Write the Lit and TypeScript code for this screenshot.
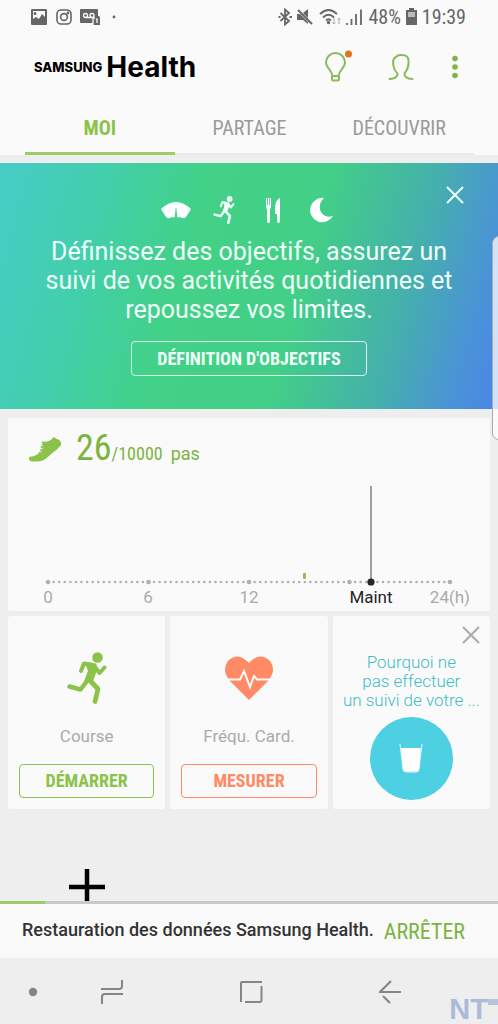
import { LitElement, html, svg, css, type TemplateResult } from "lit";
import { customElement, property, state } from "lit/decorators.js";
import { classMap } from "lit/directives/class-map.js";

const runner = html`<svg viewBox="0 0 40 52" fill="none" stroke="currentColor" stroke-linecap="round" stroke-linejoin="round" aria-hidden="true">
  <circle cx="30.500" cy="5.500" r="5.300" fill="currentColor" stroke="none"/>
  <path d="M14 19L17 11.500L26 13" stroke-width="4"/>
  <path d="M28 15L32.500 21L37.500 15.500" stroke-width="4"/>
  <path d="M19 11L28.500 12.500L29 18L25.500 28L18 29.500L22 19Z" fill="currentColor" stroke-width="2"/>
  <path d="M20 29L13.500 37.500L2.500 34.500" stroke-width="4.500"/>
  <path d="M23 28.500L31 37L28 49.500" stroke-width="4.800"/>
</svg>`;

const cross = html`<svg class="cross" viewBox="0 0 18 18" fill="none" stroke="currentColor" aria-hidden="true"><path d="M1 1L17 17M17 1L1 17"/></svg>`;

@customElement("status-bar")
class StatusBar extends LitElement {
  static styles = css`
    :host { display: flex; align-items: center; justify-content: space-between; height: 34px; padding: 0 32px 0 30px; color: #666; font-size: 20px; line-height: 24px; font-family: "Roboto Condensed", Roboto, sans-serif; }
    .group { display: flex; align-items: center; gap: 8px; }
    .right { gap: 4px; }
    svg { display: block; flex: none; }
  `;
  render() {
    return html`
      <div class="group">
        <svg width="18" height="16" viewBox="0 0 18 16"><path fill="#666" fill-rule="evenodd" d="M2 0H16Q17 0 17 1V15Q17 16 16 16H2Q1 16 1 15V1Q1 0 2 0ZM3 2V10L6 8L9 10L12 5L15 8V2ZM5 3A1.500 1.500 0 1 1 5 6A1.500 1.500 0 1 1 5 3Z"/></svg>
        <svg width="16" height="16" viewBox="0 0 16 16" fill="none" stroke="#666" stroke-width="1.600"><rect x="1" y="1" width="14" height="14" rx="4"/><circle cx="8" cy="8" r="3.400"/><circle cx="12" cy="4" r=".6" fill="#666"/></svg>
        <svg width="20" height="16" viewBox="0 0 20 16"><path fill="#666" d="M1 0H17Q18 0 18 1V7H19Q20 8 20 9V16H13V14H1Q0 14 0 13V1Q0 0 1 0Z"/><g fill="none" stroke="#fafafa" stroke-width="1.300"><circle cx="5.500" cy="6.500" r="2"/><circle cx="12" cy="6.500" r="2"/><path d="M5.500 8.500H12M13 16V9H15M16 10.500L17 10V14"/></g></svg>
        <svg width="14" height="16" viewBox="0 0 14 16"><circle cx="6" cy="8" r="1.400" fill="#666"/></svg>
      </div>
      <div class="group right">
        <svg width="14" height="18" viewBox="1 0 14 18" fill="none" stroke="#666" stroke-width="1.800"><path d="M3.500 5L12 13L8 16.500V1.500L12 5L3.500 13M1.500 9H3.500M12.500 9H15"/></svg>
        <svg width="18" height="18" viewBox="0 0 18 18"><path fill="#666" d="M1 6H4L12 14V16L7 12H1ZM7 5L12 1V10Z"/><path d="M2 2L16 16" stroke="#666" stroke-width="2"/></svg>
        <svg width="24" height="18" viewBox="0 0 24 18" fill="none" stroke="#666" stroke-width="1.800"><path d="M2 6Q10.500 -2 19 6M5 9.500Q10.500 4 16 9.500M8 12.500Q10.500 10 13 12.500"/><circle cx="10.500" cy="14.500" r=".8" fill="#666"/><path d="M16 10V16M14.500 14.500L16 16L17.500 14.500M21 16V10M19.500 11.500L21 10L22.500 11.500" stroke="#aaa" stroke-width="1"/></svg>
        <svg width="18" height="18" viewBox="1 0 18 18" stroke="#666" stroke-width="1.800"><path d="M2 17V15M6.500 17V11M11 17V6M16 17V1.500"/></svg>
        <span>48%</span>
        <svg width="13" height="18" viewBox="0 0 13 18"><path fill="#666" d="M4 0H9V2H12V17H1V2H4Z"/><path fill="#bbb" d="M3 4H10V9H3Z"/></svg>
        <time>19:39</time>
      </div>`;
  }
}

@customElement("goal-banner")
class GoalBanner extends LitElement {
  static styles = css`
    :host { position: relative; display: flex; flex-direction: column; align-items: center; padding: 32px 32px 33px; color: #f0fffa; background: linear-gradient(105deg, #46cdc8 0%, #42cfaa 20%, #42d186 38%, #42cf87 59%, #45b0ac 78%, #4a92d8 92%, #4a86e8 100%); }
    .icons { display: flex; align-items: center; gap: 20px; height: 30px; }
    .icons svg { display: block; }
    .runner { width: 24px; height: 28px; }
    .runner svg { width: 100%; height: 100%; }
    p { margin: 12px 0 17px; font-size: 25px; line-height: 29px; font-weight: 400; text-align: center; max-width: 420px; }
    .goal { box-sizing: border-box; width: 236px; height: 35px; padding: 0; border: 1px solid #d8f7ea; border-radius: 4px; background: none; color: #f0fffa; font: 700 18px/20px "Roboto Condensed", Roboto, sans-serif; }
    .close { position: absolute; top: 19px; right: 30px; padding: 4px; border: 0; background: none; color: #f0ffff; }
    .cross { display: block; width: 18px; height: 18px; stroke-width: 2; }
  `;
  render() {
    return html`
      <div class="icons">
        <svg width="32" height="18" viewBox="0 0 32 18" fill="#fff"><path d="M1 8Q16 -6 31 8L26 16Q25 17.500 23 17Q20 16 17.300 16.500L16.300 7H15.700L14.700 16.500Q12 16 9 17Q7 17.500 6 16Z"/></svg>
        <span class="runner">${runner}</span>
        <svg width="34" height="28" viewBox="2 0 34 28"><g fill="#fff"><path d="M12 2H13.200V9H14V2H15V9H15.800V2H17V10Q17 13 16 13.500V25Q16 27 14.500 27T13 25V13.500Q12 13 12 10Z"/><path d="M26 2V25Q26 27 24.500 27T23 25V18H21V13Q21 4 26 2Z"/></g></svg>
        <svg width="28" height="26" viewBox="0 0 28 26"><path fill="#fff" d="M14 1A12.200 12.200 0 1 0 23 19Q14 21.500 10.500 14Q8 6.500 14 1Z"/></svg>
      </div>
      <p>Définissez des objectifs, assurez un suivi de vos activités quotidiennes et repoussez vos limites.</p>
      <button class="goal">DÉFINITION D'OBJECTIFS</button>
      <button class="close" aria-label="Fermer">${cross}</button>`;
  }
}

@customElement("steps-card")
class StepsCard extends LitElement {
  static styles = css`
    :host { display: block; padding-top: 12px; border-radius: 3px; background: #fafafa; }
    .count { display: flex; align-items: baseline; height: 52px; padding-left: 20px; color: #7cb342; font: 18px/36px "Roboto Condensed", Roboto, sans-serif; }
    .shoe { flex: none; align-self: flex-start; margin: 6px 14px 0 0; }
    .value { font-size: 36px; }
    .unit { margin-left: 8px; font-family: Roboto, sans-serif; }
    .chart { display: block; width: 100%; font-size: 17px; fill: #aaa; text-anchor: middle; }
    .now { fill: #252525; }
  `;
  render() {
    const x = (hour: number) => 40 + hour * 16.75;
    const dots = Array.from({ length: 73 }, (_, i) => svg`<circle cx=${x(i / 3)} cy="100" r=${i % 18 ? 1.3 : 2.3}/>`);
    return html`
      <div class="count">
        <svg class="shoe" width="34" height="26" viewBox="0 0 34 26"><path fill="#8bc34a" d="M13.500 5.500Q18 6.500 22 4.500L26 1Q28 3 30.500 3.500Q33.500 5 33 9Q30 13 25 16.500L18 22.500Q14.500 25.500 9 25.500H4Q1 25 1 22.500V21Q7 20.500 10.500 17.500L13 12.500L12.500 9.500L14.500 8Z"/><path d="M12 9.500L15 10M12 12.500L15 13M11 15L13.500 16" stroke="#fafafa" stroke-width=".9"/></svg>
        <span class="value">26</span><span>/10000</span><span class="unit">pas</span>
      </div>
      <svg class="chart" viewBox="0 0 482 129" role="img" aria-label="Pas par heure">
        <g fill="#b0b0b0">${dots}</g>
        <rect x="295" y="91" width="3" height="6" rx="1" fill="#9ab84a"/>
        <path d="M363 4V100" stroke="#777" stroke-width="1.400"/>
        <circle cx="363" cy="100" r="3.600" fill="#252525"/>
        <text x="40" y="121">0</text><text x="140" y="121">6</text><text x="241" y="121">12</text>
        <text class="now" x="363" y="121">Maint</text><text x="442" y="121">24(h)</text>
      </svg>`;
  }
}

@customElement("activity-card")
class ActivityCard extends LitElement {
  @property() label = "";
  @property() action = "";
  @property() tone = "green";
  @property({ attribute: false }) icon: TemplateResult = html``;
  static styles = css`
    :host { box-sizing: border-box; display: flex; flex-direction: column; align-items: center; height: 193px; padding: 36px 11px 11px; border-radius: 3px; background: #fafafa; }
    .green { color: #8bc34a; }
    .coral { color: #ff8a65; }
    .icon { display: flex; justify-content: center; align-items: center; height: 53px; }
    .icon svg { display: block; height: 52px; }
    .label { margin: 20px 0 17px; font-size: 17px; line-height: 22px; color: #aaa; }
    button { width: 100%; height: 34px; padding: 0; border: 1px solid currentColor; border-radius: 4px; background: none; font: 700 18px/20px "Roboto Condensed", Roboto, sans-serif; }
  `;
  render() {
    return html`<div class="icon ${this.tone}">${this.icon}</div>
      <div class="label">${this.label}</div>
      <button class=${this.tone}>${this.action}</button>`;
  }
}

@customElement("water-card")
class WaterCard extends LitElement {
  static styles = css`
    :host { position: relative; box-sizing: border-box; display: flex; flex-direction: column; align-items: center; height: 193px; padding-top: 37px; border-radius: 3px; background: #fafafa; color: #3fbcc6; }
    p { margin: 0 0 7px; font-size: 17px; line-height: 19px; font-weight: 300; text-align: center; white-space: nowrap; }
    .close { position: absolute; top: 6px; right: 6px; padding: 4px; border: 0; background: none; color: #aaa; }
    .cross { display: block; width: 18px; height: 18px; stroke-width: 2; }
    .disc { display: flex; align-items: center; justify-content: center; width: 83px; height: 83px; padding: 0; border: 0; border-radius: 50%; background: #4dd0e1; }
  `;
  render() {
    return html`<p>Pourquoi ne<br>pas effectuer<br>un suivi de votre ...</p>
      <button class="disc" aria-label="Eau"><svg width="24" height="30" viewBox="0 0 24 30"><path d="M1 1L4 26Q4 29 7 29H17Q20 29 20 26L23 1" fill="none" stroke="#e6f9fb"/><path fill="#fff" d="M2 5H22L20 26Q19.500 28.500 17 28.500H7Q4.500 28.500 4 26Z"/></svg></button>
      <button class="close" aria-label="Fermer">${cross}</button>`;
  }
}

@customElement("app-root")
class AppRoot extends LitElement {
  @state() private tab = 0;
  static styles = css`
    :host { position: relative; display: flex; flex-direction: column; min-height: 100vh; overflow: hidden; background: #eee; font-family: Roboto, sans-serif; }
    .top { background: #fafafa; }
    header { display: flex; align-items: center; justify-content: space-between; height: 66px; padding: 0 36px 0 34px; }
    h1 { display: flex; align-items: center; gap: 4px; margin: 0; color: #000; font: 700 28px/32px Inter, sans-serif; }
    .brand { font-size: 13px; font-weight: 800; }
    .tools { display: flex; align-items: center; gap: 34px; }
    .tools button, .bar button { display: block; padding: 0; border: 0; background: none; }
    svg { display: block; }
    .tabs { display: grid; grid-template-columns: repeat(3, 1fr); margin: 0 24px 0 25px; }
    .tab { height: 55px; padding: 2px 0 0; border: 0; border-bottom: 2px solid #e8e8e8; background: none; color: #999; font: 400 20px/24px "Roboto Condensed", Roboto, sans-serif; }
    .tab.active { padding-top: 3px; border-bottom: 3px solid #9ccc65; color: #8bc34a; font-weight: 700; }
    goal-banner { margin-top: 8px; }
    .cards { display: grid; grid-template-columns: repeat(3, 1fr); gap: 5px; padding: 9px 8px; }
    steps-card { grid-column: 1 / -1; }
    .more { flex: 1; display: flex; align-items: flex-end; padding-left: 69px; }
    .more button { padding: 0; border: 0; background: none; }
    progress { display: block; width: 100%; height: 3px; border: 0; background: #c8c8c8; appearance: none; }
    progress::-webkit-progress-bar { background: #c8c8c8; }
    progress::-webkit-progress-value { background: #9ccc65; }
    .restore { display: flex; align-items: center; justify-content: space-between; height: 54px; padding: 0 33px 0 22px; background: #fafafa; color: #333; font-size: 18px; line-height: 28px; font-weight: 500; white-space: nowrap; box-sizing: border-box; }
    .restore button { padding: 2px 0 0; border: 0; background: none; color: #7cb342; font: 400 22px/28px "Roboto Condensed", Roboto, sans-serif; }
    .restore span { padding-bottom: 2px; }
    .bar { display: grid; grid-template-columns: 42px 1fr 1fr 1fr 38px; align-items: center; justify-items: center; height: 66px; padding-top: 1px; box-sizing: border-box; }
    .dot { justify-self: end; }
    .edge { position: absolute; top: 236px; right: -8px; width: 14px; height: 204px; box-sizing: border-box; border: 1px solid #aaa; border-radius: 8px; background: rgba(255, 255, 255, 0.75); }
    .mark { position: absolute; right: 0; bottom: 0; display: flex; align-items: flex-start; color: #aabbd9; font: 700 29px/30px "Liberation Sans", sans-serif; }
    .mark i { width: 10px; height: 6px; margin-top: 5px; background: #b7c4dc; }
  `;
  render() {
    const heart = html`<svg viewBox="0 0 50 52"><path fill="currentColor" d="M25 48L6 29Q-3 18 4 9Q14 -1 25 11Q36 -1 46 9Q53 18 44 29Z"/><path d="M2 27.500H16L20 19L26 35L30 24L33 27.500H48" fill="none" stroke="#fafafa" stroke-width="2"/></svg>`;
    return html`
      <div class="top">
        <status-bar></status-bar>
        <header>
          <h1><span class="brand">SAMSUNG</span><span>Health</span></h1>
          <div class="tools">
            <button aria-label="Conseils"><svg width="30" height="34" viewBox="0 0 30 34" fill="none" stroke="#8bba5a" stroke-width="2"><path d="M8.500 26C8 20 2 18 2 12.500A9.500 9.500 0 0 1 21 12.500C21 18 15 20 14.500 26ZM8 26V29Q8 30.500 9.500 30.500H13.500Q15 30.500 15 29V26"/><circle cx="24.500" cy="4" r="3.500" fill="#e5701e" stroke="none"/></svg></button>
            <button aria-label="Profil"><svg width="26" height="28" viewBox="0 0 26 28" fill="none" stroke="#8bba5a" stroke-width="2" stroke-linecap="round" stroke-linejoin="round"><path d="M1.500 26Q10 25.500 9.500 20.500Q6 17 5.500 13Q4 6 8 4Q10 1.500 13 2Q20.500 1.500 20.500 8Q21 15 16.500 20.500Q16 25.500 24.500 26"/></svg></button>
            <button aria-label="Plus d'options"><svg width="14" height="24" viewBox="0 0 14 24" fill="#82b24c"><circle cx="7" cy="3.500" r="2.800"/><circle cx="7" cy="12" r="2.800"/><circle cx="7" cy="20.500" r="2.800"/></svg></button>
          </div>
        </header>
        <nav class="tabs">${["MOI", "PARTAGE", "DÉCOUVRIR"].map((name, i) => html`<button class=${classMap({ tab: true, active: i === this.tab })} @click=${() => (this.tab = i)}>${name}</button>`)}</nav>
      </div>
      <goal-banner></goal-banner>
      <main class="cards">
        <steps-card></steps-card>
        <activity-card label="Course" action="DÉMARRER" .icon=${runner}></activity-card>
        <activity-card label="Fréqu. Card." action="MESURER" tone="coral" .icon=${heart}></activity-card>
        <water-card></water-card>
      </main>
      <div class="more"><button aria-label="Ajouter"><svg width="36" height="32" viewBox="0 0 36 32"><path d="M18 0V32M0 18H36" stroke="#000" stroke-width="4.500"/></svg></button></div>
      <progress max="100" value="9" aria-label="Restauration"></progress>
      <div class="restore"><span>Restauration des données Samsung Health.</span><button>ARRÊTER</button></div>
      <nav class="bar">
        <svg class="dot" width="18" height="18"><circle cx="9" cy="9" r="4.200" fill="#858585"/></svg>
        <button aria-label="Récents"><svg width="24" height="26" viewBox="0 0 24 26" fill="none" stroke="#858585" stroke-width="2"><path d="M1 10H19Q22 10 22 7V1M2 25V18Q2 15 5 15H23"/></svg></button>
        <button aria-label="Accueil"><svg width="24" height="24" viewBox="0 0 24 24" fill="none" stroke="#858585" stroke-width="2"><path d="M2 22V3Q2 2 3 2H23M22.500 6V20Q22.500 22 20.500 22H6"/></svg></button>
        <button aria-label="Retour"><svg width="22" height="24" viewBox="0 0 22 24" fill="none" stroke="#858585" stroke-width="2"><path d="M22 12H1L12 1M4 16L11 23"/></svg></button>
      </nav>
      <div class="edge"></div>
      <div class="mark">NT<i></i></div>`;
  }
}
